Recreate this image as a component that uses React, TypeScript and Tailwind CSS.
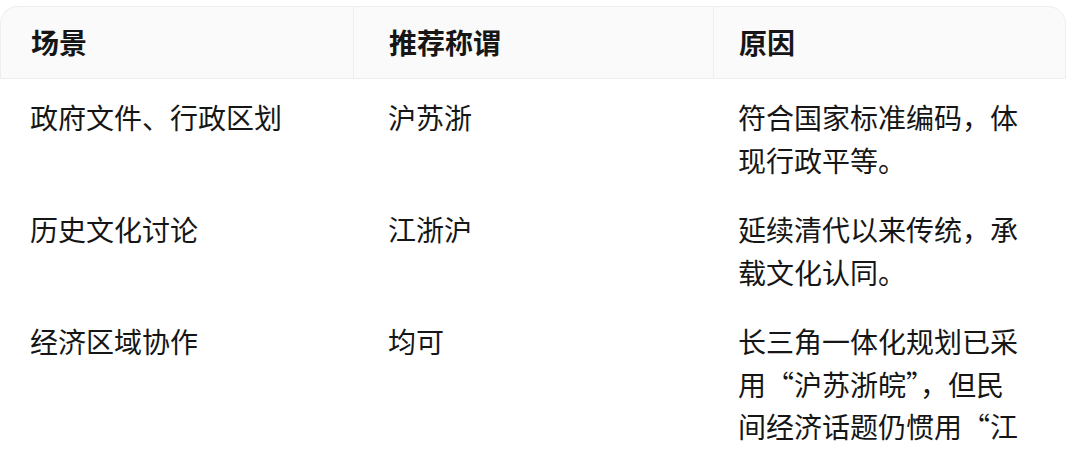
import React from "react";

const rows: [string, string, string][] = [
  ["政府文件、行政区划", "沪苏浙", "符合国家标准编码，体现行政平等。"],
  ["历史文化讨论", "江浙沪", "延续清代以来传统，承载文化认同。"],
  ["经济区域协作", "均可", "长三角一体化规划已采用“沪苏浙皖”，但民间经济话题仍惯用“江浙沪”。"],
];

export default function App() {
  return (
    <div
      className="w-[1080px] h-[453px] overflow-hidden bg-white text-[#161616]"
      style={{ fontFamily: '"Noto Sans CJK SC", "Noto Sans", sans-serif' }}
    >
      <div className="pt-[6px] w-[1066px]">
        <table className="table-fixed w-[1066px] border-separate border-spacing-0">
          <colgroup>
            <col className="w-[353px]" />
            <col className="w-[360px]" />
            <col className="w-[353px]" />
          </colgroup>
          <thead>
            <tr className="text-[28px] leading-[43px] font-bold">
              <th className="h-[73px] text-left pl-[30px] bg-[#fafafa] border-t border-l border-b border-[#eeeeee] rounded-tl-[18px]">
                场景
              </th>
              <th className="h-[73px] text-left pl-[35px] bg-[#fafafa] border-t border-l border-b border-[#eeeeee]">
                推荐称谓
              </th>
              <th className="h-[73px] text-left pl-[25px] bg-[#fafafa] border-t border-l border-r border-b border-[#eeeeee] rounded-tr-[18px]">
                原因
              </th>
            </tr>
          </thead>
          <tbody>
            {rows.map((r, i) => (
              <tr key={i} className="text-[28px] leading-[42.5px] align-top">
                <td className="pl-[30px] pt-[17px] pb-[10px]">{r[0]}</td>
                <td className="pl-[35px] pt-[17px] pb-[10px]">{r[1]}</td>
                <td className="pl-[25px] pr-[42px] pt-[17px] pb-[10px]">{r[2]}</td>
              </tr>
            ))}
          </tbody>
        </table>
      </div>
    </div>
  );
}
